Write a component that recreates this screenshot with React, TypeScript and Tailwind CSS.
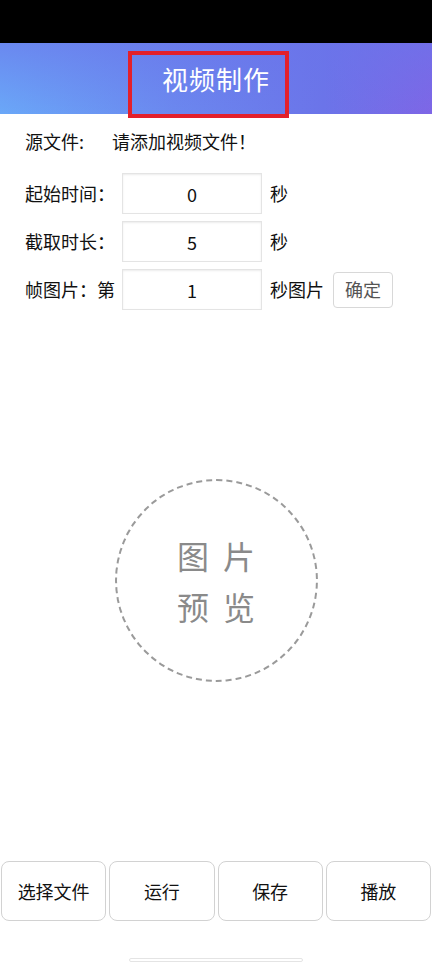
import { useState } from "react";

const cjk = { fontFamily: '"Noto Sans CJK SC", "Noto Sans", sans-serif' };

function FieldRow({
  label,
  value,
  unit,
  onChange,
  action,
}: {
  label: string;
  value: string;
  unit: string;
  onChange: (v: string) => void;
  action?: React.ReactNode;
}) {
  return (
    <div className="flex items-center h-[41px]">
      <span className="w-[97px] text-[18px] text-[#111] whitespace-nowrap">{label}</span>
      <input
        value={value}
        onChange={(e) => onChange(e.target.value)}
        className="w-[140px] h-[41px] border border-[#e4e4e4] bg-white text-center text-[18px] text-[#111] outline-none shadow-[inset_0_1px_2px_rgba(0,0,0,0.08)]"
        style={cjk}
      />
      <span className="ml-[8px] text-[18px] text-[#111]">{unit}</span>
      {action}
    </div>
  );
}

export default function App() {
  const [start, setStart] = useState("0");
  const [duration, setDuration] = useState("5");
  const [frame, setFrame] = useState("1");

  return (
    <div className="w-[432px] h-[964px] bg-white flex flex-col overflow-hidden" style={cjk}>
      {/* status bar */}
      <div className="h-[43px] bg-black shrink-0" />

      {/* header */}
      <div className="relative h-[71px] shrink-0 flex items-center justify-center bg-[linear-gradient(180deg,rgba(106,116,234,0.6),rgba(106,116,234,0)),linear-gradient(90deg,#6aa8f8,#6b88ef_40%,#6b74e9_75%,#7e66e6)]">
        <h1 className="text-[26px] text-white font-normal tracking-[1px]">视频制作</h1>
        <div className="absolute left-[128px] top-[8px] w-[161px] h-[67px] border-[4px] border-[#e3202b]" />
      </div>

      {/* source file */}
      <div className="flex items-center mt-[14px] pl-[25px] h-[26px] text-[18px] text-[#111]">
        <span className="w-[87px]">源文件:</span>
        <span>请添加视频文件！</span>
      </div>

      {/* params */}
      <div className="flex flex-col gap-[7px] mt-[19px] pl-[25px]">
        <FieldRow label="起始时间：" value={start} unit="秒" onChange={setStart} />
        <FieldRow label="截取时长：" value={duration} unit="秒" onChange={setDuration} />
        <FieldRow
          label="帧图片：第"
          value={frame}
          unit="秒图片"
          onChange={setFrame}
          action={
            <button
              type="button"
              className="ml-[9px] w-[60px] h-[36px] rounded-[4px] border border-[#d8d8d8] bg-white text-[18px] text-[#555]"
            >
              确定
            </button>
          }
        />
      </div>

      {/* preview */}
      <div className="mt-[169px] mx-auto w-[203px] h-[203px] rounded-full border-2 border-dashed border-[#9a9a9a] flex flex-col items-center justify-center text-[32px] leading-[51px] text-[#8a8a8a]">
        <div className="flex gap-[14px]">
          <span>图</span>
          <span>片</span>
        </div>
        <div className="flex gap-[14px]">
          <span>预</span>
          <span>览</span>
        </div>
      </div>

      {/* actions */}
      <div className="mt-[179px] grid grid-cols-4 gap-[3px] px-[1px]">
        {["选择文件", "运行", "保存", "播放"].map((t) => (
          <button
            key={t}
            type="button"
            className="h-[60px] rounded-[8px] border border-[#d2d2d2] bg-white text-[18px] text-[#111]"
          >
            {t}
          </button>
        ))}
      </div>

      {/* home indicator */}
      <div className="mt-[37px] mx-auto w-[174px] h-[4px] rounded-full border border-[#e4e4e4]" />
    </div>
  );
}
